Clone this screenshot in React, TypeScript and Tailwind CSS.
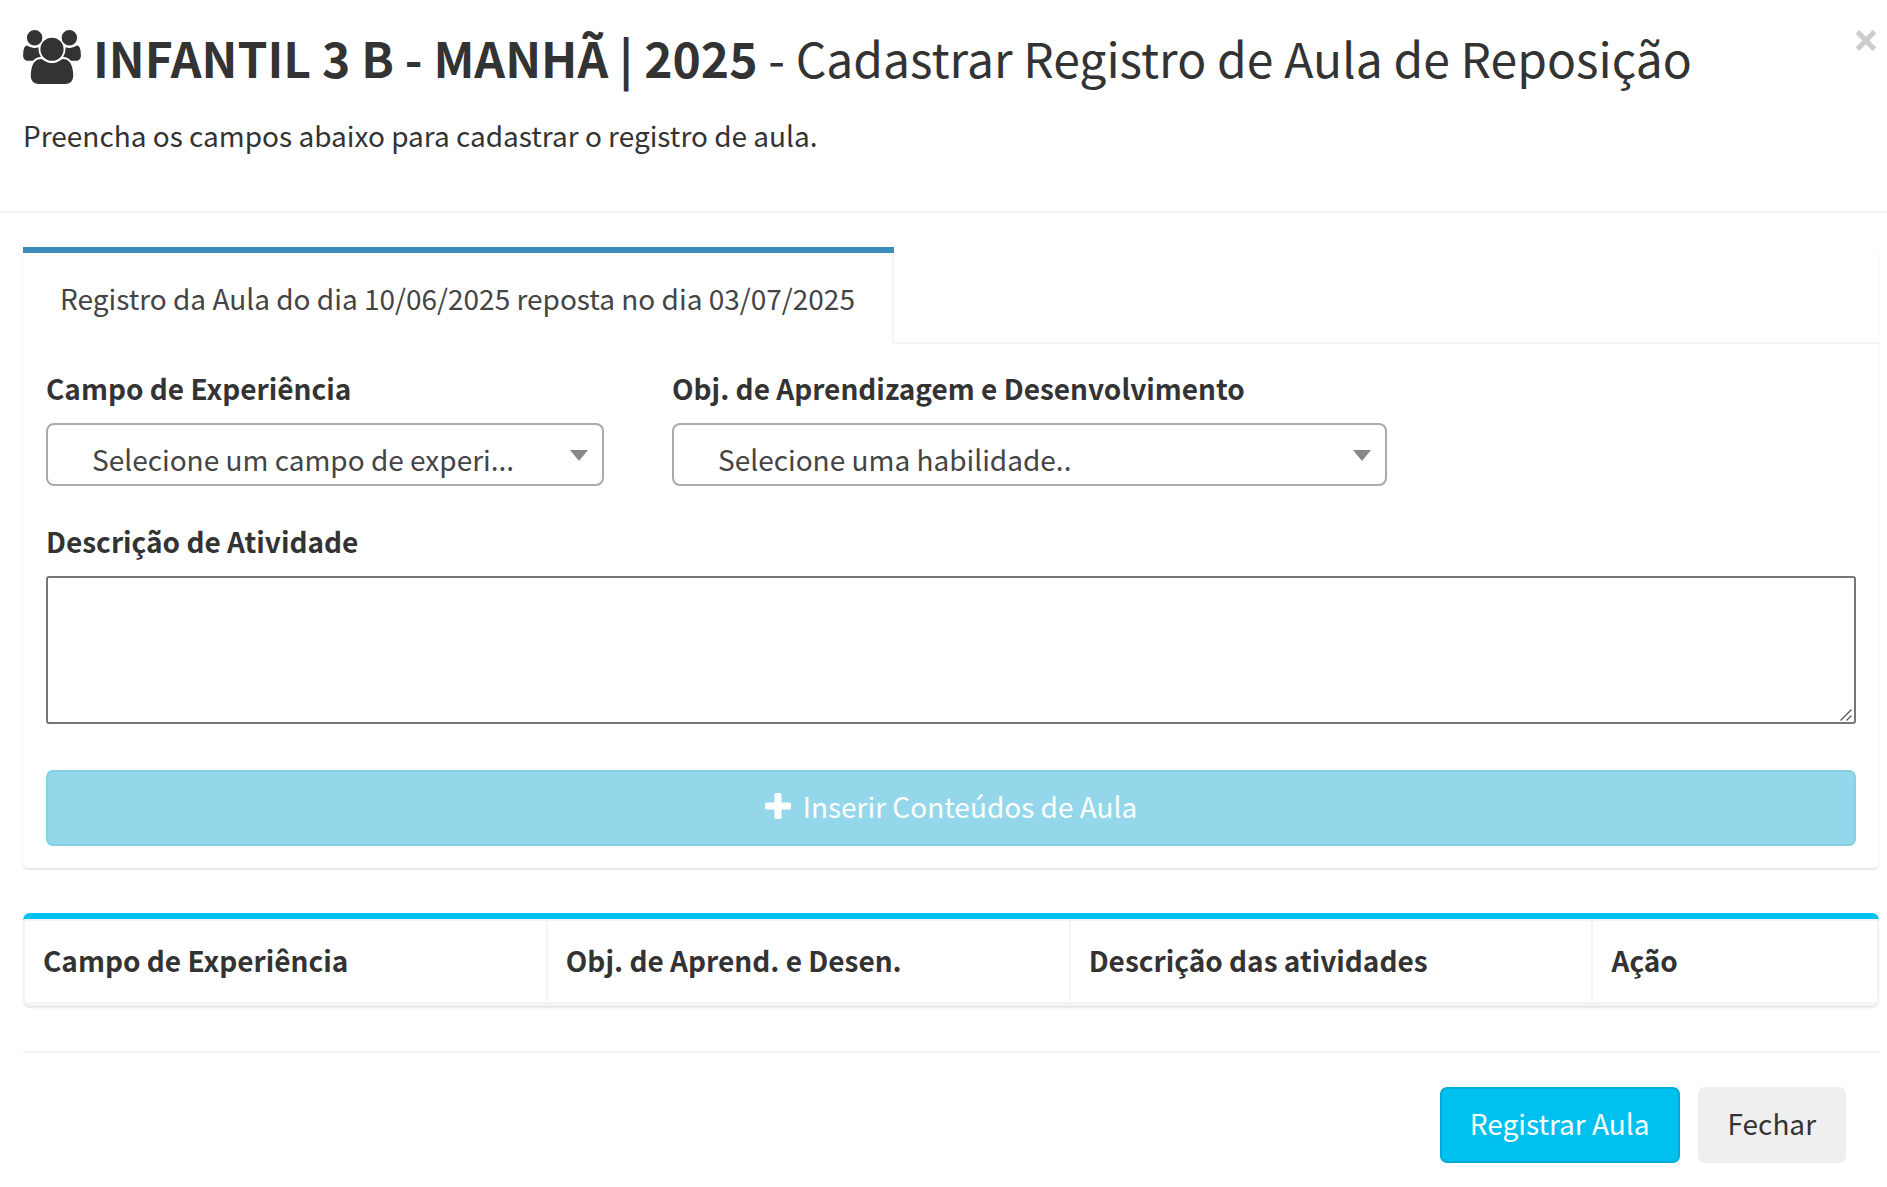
import type { ReactNode } from "react";

function UsersIcon() {
  return (
    <svg viewBox="0 0 1920 1792" className="h-[54px] w-[58px] shrink-0" fill="currentColor" aria-hidden="true">
      <path d="M593 896q-162 5-265 128h-134q-82 0-138-40.5t-56-118.5q0-353 124-353 6 0 43.5 21t97.5 42.5 119 21.5q67 0 133-23-5 37-5 66 0 139 81 256zm1071 637q0 120-73 189.5t-194 69.5h-874q-121 0-194-69.5t-73-189.5q0-53 3.5-103.5t14-109 26.5-108.5 43-97.5 62-81 85.5-53.5 111.5-20q10 0 43 21.5t73 48 107 48 135 21.5 135-21.5 107-48 73-48 43-21.5q61 0 111.5 20t85.5 53.5 62 81 43 97.5 26.5 108.5 14 109 3.5 103.5zm-1024-1277q0 106-75 181t-181 75-181-75-75-181 75-181 181-75 181 75 75 181zm704 384q0 159-112.5 271.5t-271.5 112.5-271.5-112.5-112.5-271.5 112.5-271.5 271.5-112.5 271.5 112.5 112.5 271.5zm576 225q0 78-56 118.5t-138 40.5h-134q-103-123-265-128 81-117 81-256 0-29-5-66 66 23 133 23 59 0 119-21.5t97.5-42.5 43.5-21q124 0 124 353zm-128-609q0 106-75 181t-181 75-181-75-75-181 75-181 181-75 181 75 75 181z" />
    </svg>
  );
}

function PlusIcon() {
  return (
    <svg viewBox="192 128 1408 1408" className="size-[26px]" fill="currentColor" aria-hidden="true">
      <path d="M1600 736v192q0 40-28 68t-68 28h-416v416q0 40-28 68t-68 28h-192q-40 0-68-28t-28-68v-416h-416q-40 0-68-28t-28-68v-192q0-40 28-68t68-28h416v-416q0-40 28-68t68-28h192q40 0 68 28t28 68v416h416q40 0 68 28t28 68z" />
    </svg>
  );
}

function FieldLabel({ htmlFor, children }: { htmlFor: string; children: ReactNode }) {
  return (
    <label htmlFor={htmlFor} className="mb-3 block font-bold whitespace-nowrap">
      {children}
    </label>
  );
}

function SelectBox({ id, placeholder }: { id: string; placeholder: string }) {
  return (
    <div className="relative">
      <select
        id={id}
        className="block h-[63px] w-full appearance-none overflow-hidden rounded-lg border-2 border-[#aaa] bg-white pt-[9px] pr-10 pl-11 whitespace-nowrap text-[#444]"
      >
        <option>{placeholder}</option>
      </select>
      <svg viewBox="0 0 18 11" className="pointer-events-none absolute top-[27px] right-4 h-[11px] w-[18px]" fill="#888" aria-hidden="true">
        <path d="M0 0h18l-9 11z" />
      </svg>
    </div>
  );
}

export default function App() {
  return (
    <main className="min-h-screen bg-white font-['Noto_Sans_CJK_KR','Source_Sans_Pro',sans-serif] text-[28px] leading-[46px] text-[#333]">
      <header className="border-b-2 border-[#f4f4f4] pt-[30px] pr-2 pb-[53px] pl-[23px]">
        <div className="flex items-start justify-between">
          <h1 className="flex items-center gap-3 text-[48px] leading-[54px] whitespace-nowrap">
            <UsersIcon />
            <span>
              <strong className="font-bold">INFANTIL 3 B - MANHÃ | 2025</strong> - Cadastrar Registro de Aula de Reposição
            </span>
          </h1>
          <button type="button" aria-label="Fechar janela" className="font-['Open_Sans',sans-serif] text-[46px] leading-[18px] font-bold text-[#ccc]">
            ×
          </button>
        </div>
        <p className="mt-7">Preencha os campos abaixo para cadastrar o registro de aula.</p>
      </header>

      <div className="pt-[34px] pr-2 pb-6 pl-[23px]">
        <section className="rounded-md shadow-[0_2px_2px_rgba(0,0,0,0.1)]">
          <div className="flex" role="tablist">
            <button
              type="button"
              role="tab"
              aria-selected="true"
              className="border-t-6 border-t-[#3c8dbc] bg-white whitespace-nowrap text-[#444]"
            >
              <span className="block border-r-2 border-[#f4f4f4] px-[37px] pt-[22px] pb-[23px]">
                Registro da Aula do dia 10/06/2025 reposta no dia 03/07/2025
              </span>
            </button>
            <div className="flex-1 border-b-2 border-[#f4f4f4]" />
          </div>

          <form className="px-[23px] pt-[21px] pb-[22px]">
            <div className="grid grid-cols-12 gap-x-[68px]">
              <div className="col-span-4">
                <FieldLabel htmlFor="campo">Campo de Experiência</FieldLabel>
                <SelectBox id="campo" placeholder="Selecione um campo de experi..." />
              </div>
              <div className="col-span-5">
                <FieldLabel htmlFor="objetivo">Obj. de Aprendizagem e Desenvolvimento</FieldLabel>
                <SelectBox id="objetivo" placeholder="Selecione uma habilidade.." />
              </div>
            </div>
            <div className="mt-8">
              <FieldLabel htmlFor="descricao">Descrição de Atividade</FieldLabel>
              <div className="relative">
                <textarea id="descricao" className="block h-[148px] w-full resize-none rounded-[3px] border-2 border-[#767676] bg-white px-2" />
                <svg viewBox="0 0 12 12" className="pointer-events-none absolute right-1 bottom-[3px] size-3" stroke="#555" strokeWidth="1.3" aria-hidden="true">
                  <path d="M0.500 11.500l11-11M6.500 11.500l5-5" />
                </svg>
              </div>
            </div>
            <button
              type="button"
              disabled
              className="mt-[46px] flex h-[76px] w-full items-center justify-center gap-3 rounded-[7px] border-2 border-[#86d1e6] bg-[#94d7ea] pb-[5px] text-white"
            >
              <PlusIcon />
              Inserir Conteúdos de Aula
            </button>
          </form>
        </section>

        <section className="mt-[45px] overflow-hidden rounded-[7px] border-t-6 border-[#00c0ef] shadow-[0_2px_2px_rgba(0,0,0,0.1)]">
          <table className="w-full table-fixed border-separate border-spacing-0 border-t-2 border-r-2 border-b-4 border-[#f4f4f4] text-left">
            <colgroup>
              <col className="w-[28.2%]" />
              <col className="w-[28.2%]" />
              <col className="w-[28.2%]" />
              <col />
            </colgroup>
            <thead>
              <tr>
                {["Campo de Experiência", "Obj. de Aprend. e Desen.", "Descrição das atividades", "Ação"].map((title) => (
                  <th key={title} scope="col" className="border-l-2 border-[#f4f4f4] px-[18px] pt-4 pb-[19px] font-bold">
                    {title}
                  </th>
                ))}
              </tr>
            </thead>
          </table>
        </section>

        <hr className="mt-[45px] border-t-2 border-[#f4f4f4]" />

        <footer className="mt-[34px] flex justify-end gap-[18px] pr-[33px]">
          <button type="button" className="h-[76px] rounded-[7px] border-2 border-[#00acd6] bg-[#00c0ef] px-7 pb-[5px] text-white">
            Registrar Aula
          </button>
          <button type="button" className="h-[76px] rounded-[7px] border-2 border-[#efefef] bg-[#efefef] px-7 pb-[5px]">
            Fechar
          </button>
        </footer>
      </div>
    </main>
  );
}
